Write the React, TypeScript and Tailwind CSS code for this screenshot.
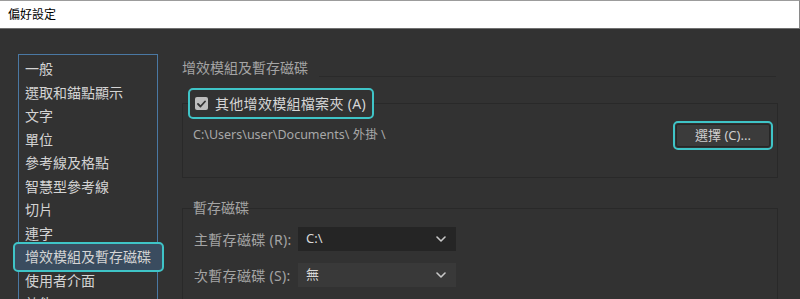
import { useState } from "react";

const categories = [
  "一般",
  "選取和錨點顯示",
  "文字",
  "單位",
  "參考線及格點",
  "智慧型參考線",
  "切片",
  "連字",
  "增效模組及暫存磁碟",
  "使用者介面",
  "效能",
  "檔案處理與剪貼簿",
];

function Chevron() {
  return (
    <svg width="10" height="6" viewBox="0 0 10 6" fill="none">
      <path d="M1 1l4 4 4-4" stroke="#c8c8c8" strokeWidth="1.6" strokeLinecap="round" strokeLinejoin="round" />
    </svg>
  );
}

function DiskSelect({ value, dark }: { value: string; dark?: boolean }) {
  return (
    <div
      className={`flex h-[24px] w-[158px] items-center justify-between pl-[8px] pr-[10px] text-[13px] text-[#d8d8d8] ${
        dark ? "bg-[#252525]" : "bg-[#393939]"
      }`}
    >
      <span>{value}</span>
      <Chevron />
    </div>
  );
}

export default function App() {
  const [selected, setSelected] = useState(8);
  const [useExtra, setUseExtra] = useState(true);

  return (
    <div className="h-[299px] w-[800px] overflow-hidden bg-[#323232] font-['Noto_Sans','Noto_Sans_CJK_TC',sans-serif]">
      <div className="flex h-[29px] items-center border-t border-b border-r border-t-[#9c9c9c] border-b-[#707070] border-r-[#8a8a8a] bg-white px-[8px] text-[12px] text-black">
        偏好設定
      </div>

      <div className="flex pl-[18px] pt-[25px]">
        {/* category list */}
        <div className="h-[260px] w-[140px] shrink-0 border border-[#4a78a3] pt-[2px]">
          {categories.map((name, i) => (
            <div
              key={name}
              onClick={() => setSelected(i)}
              className="relative flex h-[23.5px] items-center pl-[6px] text-[14px] text-[#d4d4d4]"
            >
              {selected === i && (
                <div className="absolute -top-[3px] -bottom-[3.5px] -left-[6px] -right-[7px] rounded-[5px] border-2 border-[#3fc4c7] bg-[#3a4c5f]" />
              )}
              <span className="relative whitespace-nowrap">{name}</span>
            </div>
          ))}
        </div>

        {/* settings */}
        <div className="ml-[24px] w-[596px] shrink-0">
          <div className="mt-[4px] flex items-end">
            <span className="text-[14px] leading-[20px] text-[#a4a4a4]">增效模組及暫存磁碟</span>
            <div className="mb-[1px] ml-[11px] mr-[2px] flex-1 border-b border-[#2a2a2a]" />
          </div>

          <fieldset className="mt-[10px] border border-[#292929]">
            <legend className="ml-[5px] flex h-[31px] items-center gap-[7px] rounded-[5px] border-2 border-[#3fc4c7] pl-[5px] pr-[6px]">
              <button
                type="button"
                onClick={() => setUseExtra(!useExtra)}
                className="flex h-[13px] w-[13px] items-center justify-center rounded-[2px] bg-[#bdbdbd]"
              >
                {useExtra && (
                  <svg width="9" height="8" viewBox="0 0 9 8" fill="none">
                    <path d="M1 4l2.5 2.5L8 1.5" stroke="#333" strokeWidth="1.8" strokeLinecap="round" strokeLinejoin="round" />
                  </svg>
                )}
              </button>
              <span className="text-[14px] leading-[18px] tracking-[0.3px] text-[#d6d6d6]">其他增效模組檔案夾 (A)</span>
            </legend>
            <div className="flex items-start justify-between pb-[27px] pl-[10px] pr-[4px] pt-[2px]">
              <span className="mt-[6px] text-[12.5px] leading-[16px] text-[#a8a8a8]">C:\Users\user\Documents\ 外掛 \</span>
              <div className="rounded-[5px] border-2 border-[#3fc4c7] p-[1px]">
                <button
                  type="button"
                  className="flex h-[23px] w-[94px] items-center justify-center rounded-[2px] border border-[#262626] bg-[#3b3b3b] text-[13px] text-[#cfcfcf]"
                >
                  選擇 (C)...
                </button>
              </div>
            </div>
          </fieldset>

          <fieldset className="mt-[22px] h-[120px] border border-[#292929]">
            <legend className="ml-[10px] text-[14px] leading-[16px] text-[#a4a4a4]">暫存磁碟</legend>
            <div className="flex flex-col gap-[12px] pl-[11px] pt-[11px]">
              <div className="flex items-center">
                <span className="w-[104px] text-[14px] tracking-[0.3px] text-[#a4a4a4]">主暫存磁碟 (R):</span>
                <DiskSelect value="C:\" dark />
              </div>
              <div className="flex items-center">
                <span className="w-[104px] text-[14px] tracking-[0.3px] text-[#a4a4a4]">次暫存磁碟 (S):</span>
                <DiskSelect value="無" />
              </div>
            </div>
          </fieldset>
        </div>
      </div>
    </div>
  );
}
